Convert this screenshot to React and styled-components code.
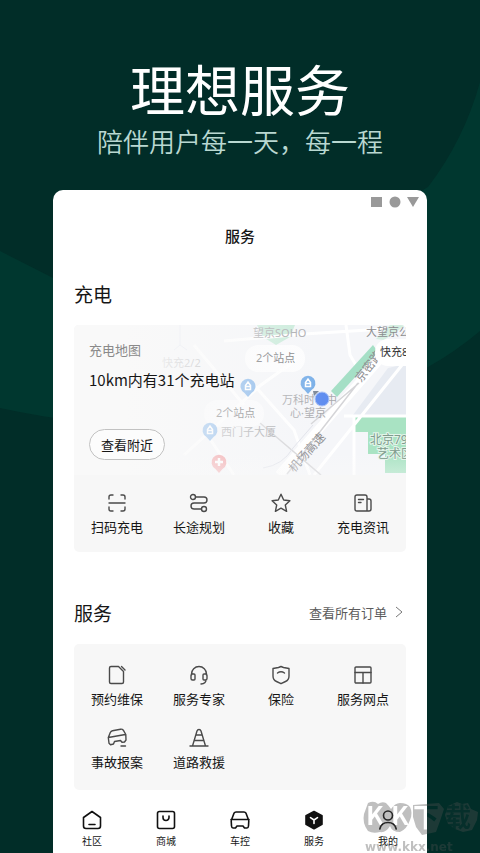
import styled, { createGlobalStyle } from "styled-components";

const colors = {
    page: "#012d28",
    pageLight: "#00372f",
    text: "#161616",
    muted: "#8a8a8a",
    line: "#4a4a4a",
    card: "#f7f7f7",
};

const GlobalStyle = createGlobalStyle`
    * {
        box-sizing: border-box;
    }
    body {
        margin: 0;
        background: ${colors.page};
        color: ${colors.text};
        font-family: "Noto Sans CJK SC", "Noto Sans", sans-serif;
    }
    button {
        padding: 0;
        border: 0;
        background: none;
        color: inherit;
        font-family: inherit;
        cursor: pointer;
    }
    a {
        color: inherit;
        text-decoration: none;
    }
    svg {
        display: block;
    }
`;

const Page = styled.div`
    position: relative;
    display: flex;
    flex-direction: column;
    min-height: 100vh;
    overflow: hidden;
`;

const Backdrop = styled.svg`
    position: absolute;
    inset: 0;
    width: 100%;
    height: 100%;
`;

const Hero = styled.header`
    position: relative;
    display: flex;
    flex-direction: column;
    align-items: center;
    gap: 7px;
    padding: 57px 0 32px;
    text-align: center;
`;

const HeroTitle = styled.h1`
    margin: 0;
    color: #ffffff;
    font-size: 55px;
    font-weight: 400;
    line-height: 60px;
`;

const HeroText = styled.p`
    margin: 0;
    color: #b9d8d1;
    font-size: 26px;
    font-weight: 350;
    line-height: 34px;
`;

const Phone = styled.div`
    position: relative;
    display: flex;
    flex: 1;
    flex-direction: column;
    margin: 0 53px;
    border-radius: 10px 10px 0 0;
    background: #ffffff;
`;

const StatusBar = styled.div`
    display: flex;
    align-items: center;
    justify-content: flex-end;
    height: 24px;
    padding-right: 8px;
`;

const AppTitle = styled.h2`
    margin: 0;
    font-size: 15px;
    font-weight: 500;
    line-height: 44px;
    text-align: center;
`;

const Content = styled.main`
    display: flex;
    flex: 1;
    flex-direction: column;
    gap: 46px;
    padding: 21px 21px 0;
`;

const Section = styled.section`
    display: flex;
    flex-direction: column;
    gap: 18px;
`;

const SectionHead = styled.div`
    display: flex;
    align-items: center;
    justify-content: space-between;
    height: 28px;
`;

const SectionTitle = styled.h3`
    margin: 0;
    font-size: 19px;
    font-weight: 400;
`;

const OrdersLink = styled.a`
    display: flex;
    align-items: center;
    gap: 8px;
    padding-right: 3px;
    color: #5c5c5c;
    font-size: 13px;
`;

const Card = styled.div`
    overflow: hidden;
    border-radius: 5px;
    background: ${colors.card};
`;

const MapPanel = styled.div`
    position: relative;
    height: 150px;
`;

const MapArt = styled.svg`
    position: absolute;
    inset: 0;
    width: 100%;
    height: 100%;
    font-family: "Noto Sans", "Noto Sans CJK SC", sans-serif;
    font-size: 11px;
`;

const MapInfo = styled.div`
    position: relative;
    display: flex;
    flex-direction: column;
    align-items: flex-start;
    height: 100%;
    padding: 15px 15px;
`;

const MapLabel = styled.span`
    color: ${colors.muted};
    font-size: 13px;
    line-height: 20px;
`;

const MapCount = styled.strong`
    margin-top: 8px;
    font-size: 15px;
    font-weight: 400;
    line-height: 24px;
`;

const NearbyButton = styled.button`
    && {
        height: 31px;
        margin-top: auto;
        padding: 0 11px;
        border: 1px solid #c2c2c2;
        border-radius: 16px;
        background: #fcfcfc;
        font-size: 13px;
    }
`;

const Grid = styled.div`
    display: grid;
    grid-template-columns: repeat(4, 1fr);
    row-gap: 19px;
    padding: ${({ $roomy }) => ($roomy ? "21px 2px 18px" : "18px 2px 15px")};
`;

const GridItem = styled.button`
    display: flex;
    flex-direction: column;
    align-items: center;
    gap: 4px;
    font-size: 13px;
    line-height: 20px;
`;

const LineIcon = styled.svg`
    width: 20px;
    height: 20px;
    fill: none;
    stroke: ${colors.line};
    stroke-width: 1.4;
    stroke-linecap: round;
    stroke-linejoin: round;
`;

const TabBar = styled.nav`
    display: flex;
    padding: 19px 2px 5px;
`;

const Tab = styled.a`
    display: flex;
    flex: 1;
    flex-direction: column;
    align-items: center;
    gap: 3px;
    font-size: 10px;
    line-height: 14px;
`;

const TabIcon = styled.svg`
    width: 22px;
    height: 22px;
    fill: none;
    stroke: #111111;
    stroke-width: 1.6;
    stroke-linecap: round;
    stroke-linejoin: round;
`;

const Watermark = styled.svg`
    position: absolute;
    right: 0;
    bottom: 0;
    width: 120px;
    height: 56px;
    pointer-events: none;
`;

const actions = [
    {
        label: "扫码充电",
        icon: (
            <path d="M2 6V4q0-2 2-2h2M14 2h2q2 0 2 2v2M18 14v2q0 2-2 2h-2M6 18H4q-2 0-2-2v-2M2 10h16" />
        ),
    },
    {
        label: "长途规划",
        icon: (
            <>
                <circle cx="4" cy="4" r="2.500" />
                <circle cx="15" cy="16" r="2.500" />
                <path d="M6.500 4H15a3 3 0 0 1 0 6H5a3 3 0 0 0 0 6h7.500" />
            </>
        ),
    },
    {
        label: "收藏",
        icon: (
            <path d="M10 1.200l2.700 5.800 6.200.7-4.600 4.300 1.300 6.300L10 15.200l-5.600 3.100 1.300-6.300L1.100 7.700l6.200-.7z" />
        ),
    },
    {
        label: "充电资讯",
        icon: (
            <path d="M14 18H4q-2 0-2-2V4q0-2 2-2h8q2 0 2 2v14zM14 6h2q2 0 2 2v8q0 2-2 2h-2M5.500 6.500h5M5.500 9.500H8" />
        ),
    },
];

const services = [
    {
        label: "预约维保",
        icon: (
            <path d="M11.500 1.500H4q-1.500 0-1.500 1.500v14q0 1.500 1.500 1.500h11q1.500 0 1.500-1.500V6.500zM14.500 1.500l3.500 3.500" />
        ),
    },
    {
        label: "服务专家",
        icon: (
            <path d="M2.500 10V9a7.500 7.500 0 0 1 15 0v1M2 10.500a1.500 1.500 0 0 1 1.500-1.500H5q1 0 1 1v4q0 1-1 1H3.500A1.500 1.500 0 0 1 2 13.500zM18 10.500A1.500 1.500 0 0 0 16.500 9H15q-1 0-1 1v4q0 1 1 1h1.500a1.500 1.500 0 0 0 1.500-1.500zM17 15q0 3.500-5 4" />
        ),
    },
    {
        label: "保险",
        icon: (
            <path d="M10 1.500l2.500 1 5.500 1V11q0 4-3.500 5.500L10 18.700l-4.500-2.200Q2 15 2 11V3.500l5.500-1zM6.500 8q3.500-2.500 7 0" />
        ),
    },
    {
        label: "服务网点",
        icon: (
            <>
                <rect x="2" y="2" width="16" height="16" rx="1" />
                <path d="M2 7.500h16M10 7.500V18" />
            </>
        ),
    },
    {
        label: "事故报案",
        icon: (
            <path d="M1.300 9.500l2-5Q4 3 5.500 2.700l8-1.500q1.800-.3 2.800 1l2.500 4.300.2 5.500-1.500 2-2.500.3-1.500-1.800-6 1-1 2.500-3 .7-1.500-1.500zM1.300 9.500l17-3M14 18h4.500" />
        ),
    },
    {
        label: "道路救援",
        icon: (
            <path d="M1 18h18M3.500 18L8 3q.5-1.500 2-1.500T12 3l4.500 15M7 7h6M5.500 12.500h9" />
        ),
    },
];

const tabs = [
    {
        label: "社区",
        icon: (
            <path d="M2.500 8.500L11 2.500l8.500 6V17q0 2.500-2.500 2.500H5q-2.500 0-2.500-2.500zM8 15.500h6" />
        ),
    },
    {
        label: "商城",
        icon: (
            <>
                <rect x="2.500" y="2.500" width="17" height="17" rx="2" />
                <path d="M8 7v1.500a3 3 0 0 0 6 0V7" />
            </>
        ),
    },
    {
        label: "车控",
        icon: (
            <path d="M2 10.500h18M3 9.500l2-5.300Q5.700 3 7 3h8q1.300 0 2 1.200l2 5.300.8 2-.3 5.500q-.2 2-1.500 2h-2.500l-1.500-2h-6l-1.500 2H4q-1.300 0-1.500-2l-.3-5.500z" />
        ),
    },
    {
        label: "服务",
        icon: (
            <>
                <path
                    d="M11 2.500l8 4.300v8.500l-8 4.400-8-4.400V6.800z"
                    fill="#111111"
                />
                <path d="M7.500 8.700L11 11l3.500-2.300M11 11v3.500" stroke="#fff" />
            </>
        ),
    },
    {
        label: "我的",
        icon: (
            <>
                <circle cx="11" cy="6.500" r="4.500" />
                <path d="M2.800 20q1.500-6.500 8.200-6.500t8.200 6.500" />
            </>
        ),
    },
];

function MapPin({ x, y, color, cross }) {
    return (
        <g transform={`translate(${x} ${y})`}>
            <path
                d="M0 11L-3.500 7A7.500 7.500 0 1 1 3.500 7z"
                fill={color}
            />
            <path
                d={cross ? "M-4 0h8M0-4v8" : "M-2.500 3.500v-4L0-4l2.500 3.500v4zM-2.500.5h5"}
                fill="none"
                stroke="#fff"
                strokeWidth={cross ? 2.5 : 1.5}
            />
        </g>
    );
}

function ChargeMap() {
    return (
        <MapArt viewBox="0 0 332 150" preserveAspectRatio="xMaxYMid slice">
            <defs>
                <linearGradient id="mapFade">
                    <stop offset="0.15" stopColor="#f9f9f9" />
                    <stop offset="0.75" stopColor="#f9f9f9" stopOpacity="0" />
                </linearGradient>
                <linearGradient id="mapFoot" x2="0" y2="1">
                    <stop offset="0.85" stopColor="#f9f9f9" stopOpacity="0" />
                    <stop offset="1" stopColor="#f9f9f9" stopOpacity="0.4" />
                </linearGradient>
            </defs>
            <rect width="332" height="150" fill="#f5f6f9" />
            <path d="M314 43l18-4v51h-53z" fill="#e7ebf2" />
            <path
                d="M281 92h51v56h-21v-19h-17v-22h-13z"
                fill="#a9e3c3"
            />
            <path d="M183 0h38l-5 12-14 8-13-8z" fill="#c9ebda" />
            <path d="M302 14l14-14h16l-22 15z" fill="#d6efe2" />
            <g fill="none" stroke="#ffffff" strokeWidth="3">
                <path d="M150 16l80-7 80-5M272 0l4 30 10 17M110 130l77-70 35-25M180 60l40 45 16 45M120 20l50 60M160 150l-30-45" />
                <path d="M270 91h62M280 91v59M240 150l92-115" />
                <path d="M205 150l115-132" strokeWidth="9" />
            </g>
            <path d="M299 20l5 7-41 45-6-6z" fill="#a5dfc6" />
            <g fill="none" stroke="#d5d5d8">
                <path d="M213 149L284 58M237 99l48-41" strokeWidth="1.5" />
                <path d="M186 98l61 52" strokeWidth="1.5" />
                <path d="M189 143q20-3 30-20l20-23" stroke="#e0e2ea" />
                <path d="M106 0v20l-6 5M106 20l7 5" stroke="#dcdfee" />
            </g>
            <g fill="#a9a9ad">
                <text x="179" y="12">望京SOHO</text>
                <text x="208" y="79">万科时代中</text>
                <text x="216" y="92">心·望京</text>
                <text x="147" y="111">西门子大厦</text>
                <text x="88" y="42">快充2/2</text>
            </g>
            <g fill="#8d8d90">
                <text x="292" y="11">大望京公园</text>
                <text x="220" y="148" fontSize="12" transform="rotate(-48 220 148)">
                    机场高速
                </text>
                <text x="287" y="58" fontSize="12" transform="rotate(-52 287 58)">
                    京密路
                </text>
            </g>
            <g
                fill="#809c8d"
                stroke="#e2f5ea"
                strokeWidth="2"
                paintOrder="stroke"
                fontSize="12"
            >
                <text x="296" y="119">北京798</text>
                <text x="303" y="133">艺术区</text>
            </g>
            <rect x="171" y="20" width="60" height="27" rx="13" fill="#fff" opacity="0.8" />
            <rect x="130" y="75" width="60" height="27" rx="13" fill="#fff" opacity="0.6" />
            <rect x="301" y="14" width="60" height="27" rx="13" fill="#fff" />
            <g fill="#77777a">
                <text x="182" y="37">2个站点</text>
                <text x="142" y="92">2个站点</text>
            </g>
            <text x="306" y="31" fill="#333">快充8/8</text>
            <MapPin x={174} y={61} color="#82b4ea" />
            <MapPin x={234} y={58} color="#78aee8" />
            <MapPin x={136} y={105} color="#82b4ea" />
            <MapPin x={145} y={137} color="#f08a8f" cross />
            <path d="M239 66h6l-5 5z" fill="#7c8796" />
            <circle cx="248" cy="74" r="7" fill="#5f8df0" stroke="#a9c2f7" />
            <rect width="332" height="150" fill="url(#mapFade)" />
            <rect width="332" height="150" fill="url(#mapFoot)" />
        </MapArt>
    );
}

function IconGrid({ items, roomy }) {
    return (
        <Grid $roomy={roomy}>
            {items.map(({ label, icon }) => (
                <GridItem key={label} type="button">
                    <LineIcon viewBox="0 0 20 20">{icon}</LineIcon>
                    {label}
                </GridItem>
            ))}
        </Grid>
    );
}

function SiteMark() {
    return (
        <Watermark viewBox="0 0 120 56">
            <mask id="markText">
                <rect width="120" height="56" fill="#fff" />
                <g fontWeight="700" fill="#000">
                    <text x="6" y="28" fontSize="26">K</text>
                    <text x="31" y="28" fontSize="26">K</text>
                    <text x="53" y="30" fontSize="26">下</text>
                    <text x="85" y="30" fontSize="26" fillOpacity="0.8">载</text>
                </g>
            </mask>
            <g fill="#505050" opacity="0.36">
                <path
                    d="M8 6q6-3 10 1 4-3 8-1 3 3 5 6 4-6 9-6 7 0 10 4 3 6 0 13-3 9-10 12-8 0-10-6-4 7-10 6-7 2-12-1-6-8-4-17zM53 8l26-2 5 6-4 12-4 11-14 3-6-8-3-10zM88 9l9-4 5 2 6-1 3 6 7 3-1 8-5 10-9 2-8-3-7-5-3-9z"
                    mask="url(#markText)"
                />
                <text
                    x="5"
                    y="54"
                    fontFamily="DejaVu Sans"
                    fontSize="12"
                    fontWeight="700"
                >
                    www.kkx.net
                </text>
            </g>
        </Watermark>
    );
}

function App() {
    return (
        <Page>
            <GlobalStyle />
            <Backdrop viewBox="0 0 480 853" preserveAspectRatio="none">
                <path
                    d="M480 82Q464 140 428 187L240 300 53 278 0 251V408Q240 460 428 367 455 352 480 331z"
                    fill={colors.pageLight}
                />
            </Backdrop>
            <Hero>
                <HeroTitle>理想服务</HeroTitle>
                <HeroText>陪伴用户每一天，每一程</HeroText>
            </Hero>
            <Phone>
                <StatusBar>
                    <svg width="48" height="12" fill="#999999">
                        <path d="M0 1h11v10H0z" />
                        <circle cx="24" cy="6" r="5.5" />
                        <path d="M36 1h12l-6 10z" />
                    </svg>
                </StatusBar>
                <AppTitle>服务</AppTitle>
                <Content>
                    <Section>
                        <SectionHead>
                            <SectionTitle>充电</SectionTitle>
                        </SectionHead>
                        <Card>
                            <MapPanel>
                                <ChargeMap />
                                <MapInfo>
                                    <MapLabel>充电地图</MapLabel>
                                    <MapCount>10km内有31个充电站</MapCount>
                                    <NearbyButton type="button">
                                        查看附近
                                    </NearbyButton>
                                </MapInfo>
                            </MapPanel>
                            <IconGrid items={actions} />
                        </Card>
                    </Section>
                    <Section>
                        <SectionHead>
                            <SectionTitle>服务</SectionTitle>
                            <OrdersLink href="#orders">
                                查看所有订单
                                <svg width="8" height="12" fill="none" stroke="#777777">
                                    <path d="M1 1l6 5-6 5" />
                                </svg>
                            </OrdersLink>
                        </SectionHead>
                        <Card>
                            <IconGrid items={services} roomy />
                        </Card>
                    </Section>
                </Content>
                <TabBar>
                    {tabs.map(({ label, icon }) => (
                        <Tab key={label} href={`#${label}`}>
                            <TabIcon viewBox="0 0 22 22">{icon}</TabIcon>
                            {label}
                        </Tab>
                    ))}
                </TabBar>
            </Phone>
            <SiteMark />
        </Page>
    );
}

export default App;
